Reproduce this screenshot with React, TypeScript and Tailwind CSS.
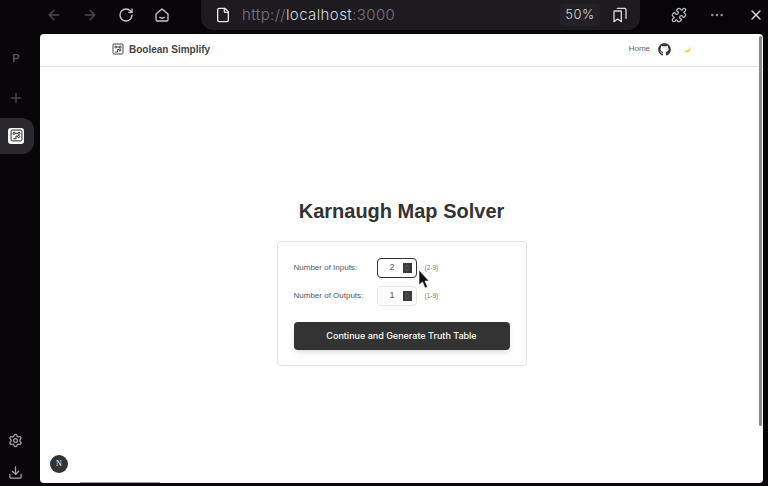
import React from "react";
import { ArrowLeft, ArrowRight, RotateCw, File, Puzzle, MoreHorizontal, X, Plus, Settings, Download, ChevronsUpDown } from "lucide-react";
import { FaGithub } from "react-icons/fa";

const sans = { fontFamily: '"Liberation Sans", Arial, sans-serif' };

function CircuitIcon({ size, color, stroke = 1.6 }: { size: number; color: string; stroke?: number }) {
  return (
    <svg width={size} height={size} viewBox="0 0 24 24" fill="none" stroke={color} strokeWidth={stroke * 1.5}>
      <rect x="2" y="2" width="20" height="20" rx="2" />
      <circle cx="7.5" cy="8" r="2" />
      <circle cx="16.5" cy="8" r="2" />
      <path d="M9.5 8h5M6 18h5v-5h3" />
      <circle cx="16" cy="14" r="2" />
    </svg>
  );
}

function HomeSmile() {
  return (
    <svg width="16" height="16" viewBox="0 0 24 24" fill="none" stroke="#c8c8cb" strokeWidth="2" strokeLinejoin="round" strokeLinecap="round">
      <path d="M3 10.5 12 3l9 7.5V19a2 2 0 0 1-2 2H5a2 2 0 0 1-2-2z" />
      <path d="M8.5 15.5c2 1.6 5 1.6 7 0" />
    </svg>
  );
}

function Bookmarks() {
  return (
    <svg width="16" height="16" viewBox="0 0 24 24" fill="none" stroke="#d8d8da" strokeWidth="2" strokeLinejoin="round" strokeLinecap="round" className="mx-[12px]">
      <path d="M3 7a1 1 0 0 1 1-1h9a1 1 0 0 1 1 1v15l-5.5-4L3 22z" />
      <path d="M8 2h11a2 2 0 0 1 2 2v13" />
    </svg>
  );
}

function Stepper({ value, focused }: { value: string; focused?: boolean }) {
  return (
    <div className={`flex h-5 w-10 items-center justify-end rounded-sm border bg-white pr-1 ${focused ? "border-[#333]" : "border-[#e5e5e5]"}`}>
      <span className="mr-2 text-[9px] text-[#555]">{value}</span>
      <span className="flex h-[10px] w-[9px] items-center justify-center bg-[#3a3a3a]">
        <ChevronsUpDown size={8} color="#bbb" strokeWidth={1.25} />
      </span>
    </div>
  );
}

function Row({ label, value, range, focused }: { label: string; value: string; range: string; focused?: boolean }) {
  return (
    <div className="flex h-5 items-center">
      <span className="w-[83px] text-[8px] text-[#555]">{label}</span>
      <Stepper value={value} focused={focused} />
      <span className="ml-2 text-[6.5px] text-[#777]">{range}</span>
    </div>
  );
}

export default function App() {
  return (
    <div className="relative flex h-[486px] w-[768px] flex-col overflow-hidden bg-[#070508]" style={sans}>
      <header className="flex h-[34px] shrink-0 items-start">
        <div className="flex h-[30px] w-[201px] items-center pl-[46px]">
          <ArrowLeft size={16} color="#4d4c50" className="mr-[20px]" />
          <ArrowRight size={16} color="#4d4c50" className="mr-[20px]" />
          <RotateCw size={16} color="#c8c8cb" className="mr-[20px]" />
          <HomeSmile />
        </div>
        <div className="flex h-[30px] w-[439px] items-center rounded-b-xl bg-[#1e1b20] pl-[14px]">
          <File size={16} color="#e8e8e8" />
          <span className="ml-[11px] text-[15px] tracking-[0.4px] text-[#77757a]" style={{ fontFamily: '"Inter", sans-serif', fontWeight: 300 }}>
            http://<span className="text-[#d8d8da]">localhost</span>:3000
          </span>
          <span className="ml-auto flex h-[22px] w-10 items-center justify-center rounded bg-[#242126] text-[13px] tracking-[0.5px] text-[#d8d8da]" style={{ fontFamily: '"Inter", sans-serif', fontWeight: 300 }}>50%</span>
          <Bookmarks />
        </div>
        <div className="flex h-[30px] flex-1 items-center pl-[31px]">
          <Puzzle size={16} color="#b9b9bc" />
          <MoreHorizontal size={16} color="#8d8d90" className="ml-[22px]" />
          <X size={16} color="#d8d8da" className="ml-[23px]" />
        </div>
      </header>

      <div className="flex min-h-0 flex-1">
        <aside className="flex w-10 shrink-0 flex-col pb-[6px]">
          <span className="mt-[16px] w-8 text-center text-[11px] font-bold text-[#57565a]">P</span>
          <Plus size={16} color="#4a494d" className="ml-2 mt-[23px]" />
          <div className="mt-[12px] flex h-9 w-[34px] items-center justify-center rounded-r-xl bg-[#2a282c] pr-[2px]">
            <div className="flex h-4 w-4 items-center justify-center rounded-[3px] bg-white">
              <CircuitIcon size={13} color="#222" stroke={1.2} />
            </div>
          </div>
          <Settings size={15} color="#a8a8ab" className="ml-[8px] mt-auto" />
          <Download size={15} color="#a8a8ab" className="ml-[8px] mt-[17px]" />
        </aside>

        <main className="mb-[3px] flex w-[723px] flex-col rounded-sm bg-white">
          <nav className="flex h-[33px] shrink-0 items-center border-b border-[#e0e0e0] pb-[2px] pl-[72px] pr-[71px]">
            <CircuitIcon size={12} color="#333" stroke={1.2} />
            <span className="ml-[5px] text-[10px] font-bold text-[#444]">Boolean Simplify</span>
            <span className="ml-auto text-[8px] text-[#666]">Home</span>
            <FaGithub size={13} color="#333" className="ml-[8px]" />
            <svg width="9" height="9" viewBox="0 0 9 9" className="ml-[12px]">
              <path d="M7 1C7.2 4.5 4.5 6 1 5.6 2.8 8.6 9 8 7 1z" fill="#f2d335" />
            </svg>
          </nav>

          <div className="flex flex-1 flex-col items-center pt-[132px]">
            <h1 className="text-[20px] font-bold leading-6 text-[#333]">Karnaugh Map Solver</h1>
            <section className="mt-[18px] h-[125px] w-[250px] rounded border border-[#e3e3e3] px-4 pt-4">
              <div className="flex flex-col gap-2">
                <Row label="Number of Inputs:" value="2" range="(2-9)" focused />
                <Row label="Number of Outputs:" value="1" range="(1-9)" />
              </div>
              <button className="mt-[16px] h-[28px] w-[216px] rounded bg-[#333] text-[9px] font-medium text-white shadow-md" style={{ fontFamily: '"Inter", sans-serif' }}>
                Continue and Generate Truth Table
              </button>
            </section>
          </div>
        </main>
      </div>

      {/* overlays */}
      <div className="absolute left-[759px] top-[36px] h-[390px] w-[3px] rounded-sm bg-[#8a8a8a]" />
      <div className="absolute left-[80px] top-[482px] h-[1px] w-[80px] bg-[#999]" />
      <div className="absolute left-[50px] top-[455px] flex h-[18px] w-[18px] items-center justify-center rounded-full bg-[#333] text-[8px] text-white" style={{ fontFamily: '"Liberation Serif", serif' }}>N</div>
      <svg className="absolute left-[418px] top-[270px]" width="12" height="20" viewBox="0 0 12 20">
        <path d="M1 0v15l3.5-3 2.5 6 2.5-1-2.5-6H11z" fill="#111" stroke="#fff" strokeWidth="0.6" />
      </svg>
    </div>
  );
}
